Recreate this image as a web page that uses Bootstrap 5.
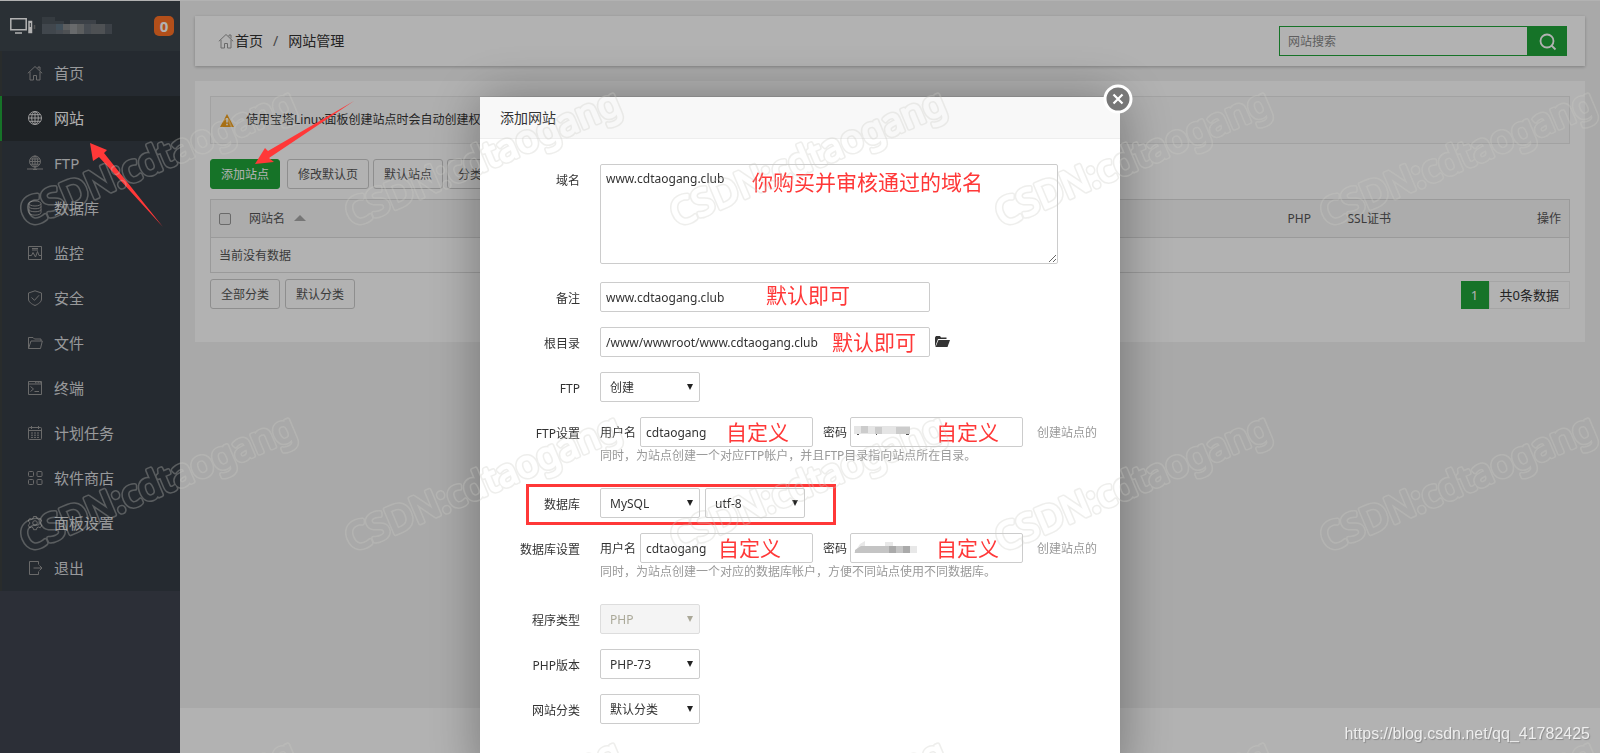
<!DOCTYPE html>
<html lang="zh-CN">
<head>
<meta charset="utf-8">
<meta name="viewport" content="width=device-width, initial-scale=1">
<title>网站管理</title>
<link href="https://cdn.jsdelivr.net/npm/bootstrap@5.3.0/dist/css/bootstrap.min.css" rel="stylesheet">
<style>
  body { font: 12px/20px "Noto Sans", "Noto Sans CJK SC", sans-serif; color: #333; background: #f3f3f3; overflow: hidden; }
  a { color: inherit; text-decoration: none; }
  .shell { border-top: 1px solid #fff; }
  .side { width: 180px; background: #3f4450; }
  .side-head { height: 50px; background: #3d454d; padding: 0 6px 0 10px; }
  .count { width: 20px; height: 20px; border-radius: 5px; background: #ff7226; font-size: 15px; }
  .menu a { height: 45px; padding: 0 0 2px 25px; border-left: 2px solid #3c403f; background: #363d46; color: #dadcdf; font-size: 15px; gap: 11px; }
  .menu svg { width: 16px; height: 16px; stroke: #999; fill: none; }
  .menu a.active { background: #2c3136; border-color: #20a53a; color: #fff; }
  .menu a.active svg { stroke: #ddd; }
  .panel { background: #fff; margin: 15px 15px 0; }
  .crumb-bar { height: 50px; padding: 0 18px 0 23px; box-shadow: 0 1px 3px rgba(0,0,0,.25); font-size: 14px; }
  .crumb-bar a { margin-left: 1px; }
  .crumb-gap { margin: 0 10px; color: #666; }
  .search-field { width: 288px; height: 30px; }
  .search-field input { border: 1px solid #20a53a; padding: 2px 8px 0; font-size: 12px; border-radius: 0; }
  .search-field button { width: 39px; background: #20a53a; border: 0; color: #fff; }
  .search-field input::placeholder { color: #888; }
  .site-panel { padding: 15px 15px 33px; }
  .tip { height: 48px; border: 1px solid #e9e9e9; background: #fbfbfb; padding-left: 9px; gap: 12px; margin-bottom: 15px; }
  .tools { gap: 4px; margin-bottom: 10px; }
  .tool { height: 30px; border: 1px solid #ccc; border-radius: 3px; background: #fff; color: #555; padding: 0 10px; font-size: 12px; line-height: 30px; white-space: nowrap; }
  .tool.go { background: #20a53a; border-color: #20a53a; color: #fff; margin-right: 3px; }
  .sites { border: 1px solid #ddd; color: #555; margin-bottom: 6px; }
  .sites > :not(caption) > * > * { padding: 8px; border-bottom: 0; font-weight: 400; background: transparent; color: inherit; }
  .sites thead th { height: 38px; background: #f6f6f6; border-bottom: 1px solid #ddd; }
  .sites tbody td { height: 34px; padding: 8px 8px 6px; }
  .sites .form-check-input { width: 12px; height: 12px; margin: 0 18px 0 0; border-radius: 2px; border-color: #999; background: #eee; vertical-align: -2px; }
  .sites th svg { margin-left: 6px; vertical-align: 2px; }
  .pages { height: 28px; font-size: 13px; line-height: 26px; color: #333; }
  .pages b { width: 28px; background: #20a53a; color: #fff; font-weight: 400; line-height: 28px; }
  .pages span { border: 1px solid #ececec; padding: 0 10px; }
  .foot { height: 45px; background: #fff; }
  .modal-backdrop { --bs-backdrop-opacity: .3; }
  .modal { overflow: hidden; }
  .modal-dialog { max-width: 640px; margin: 97px auto 0; }
  .modal-content { border: 0; border-radius: 0; box-shadow: 1px 1px 50px rgba(0,0,0,.35); }
  .modal-header { height: 42px; padding: 0 20px; background: #f8f8f8; border-bottom: 1px solid #eee; border-radius: 0; font-size: 14px; }
  .shut { position: absolute; right: -13px; top: -13px; width: 30px; height: 30px; border: 0; padding: 0; background: none; }
  .modal-body { padding: 25px 22px 40px 0; }
  .line { display: flex; margin-bottom: 15px; }
  .line > label, .line > .cap { width: 100px; height: 30px; margin-right: 20px; text-align: right; line-height: 34px; flex: none; }
  .line.tall { margin-bottom: 18px; }
  .line .form-control, .line .form-select { height: 30px; border: 1px solid #ccc; border-radius: 2px; padding: 0 5px; font-size: 12px; line-height: 28px; color: #333; }
  .line textarea.form-control { height: 100px; padding: 4px 5px; line-height: 20px; resize: both; }
  .line .form-select { width: 100px; padding: 1px 20px 0 9px; background: #fff url("data:image/svg+xml,%3Csvg xmlns='http://www.w3.org/2000/svg' viewBox='0 0 6 6'%3E%3Cpath d='M0 0h6L3 6z' fill='%23222'/%3E%3C/svg%3E") no-repeat right 6px top 11px / 6px 6px; }
  .line .form-select:disabled { border-color: #ddd; color: #aaa898; opacity: 1; background-color: #f4f4f4; background-image: url("data:image/svg+xml,%3Csvg xmlns='http://www.w3.org/2000/svg' viewBox='0 0 6 6'%3E%3Cpath d='M0 0h6L3 6z' fill='%23aaa898'/%3E%3C/svg%3E"); }
  .wide { width: 458px; }
  .mid { width: 330px; }
  .pair { width: 173px; }
  .duo { gap: 5px; }
  .note { color: #999; }
  .account { width: 500px; height: 56px; line-height: 32px; }
  .account .d-flex { height: 30px; }
  .account .second { line-height: 18px; }
  .user-cap { margin-right: 4px; }
  .pass-cap { margin: 0 3px 0 10px; }
  .side-note { margin-left: 14px; }
  .mark-red { position: absolute; color: #ff3838; font-size: 21px; line-height: 28px; top: 1px; white-space: nowrap; pointer-events: none; }
  .frame-red { position: absolute; left: 46px; top: -4px; width: 310px; height: 41px; border: 3px solid #ff3838; pointer-events: none; }
  .mosaic { position: absolute; left: 4px; top: 8px; }
  .over { position: fixed; inset: 0; width: 100%; height: 100%; z-index: 2000; pointer-events: none; }
  .source { position: fixed; right: 10px; bottom: 8px; z-index: 2001; font: 16px/22px "Liberation Sans", sans-serif; color: #eee; text-shadow: 1px 1px 1px #888; }
</style>
</head>
<body>
<div class="shell d-flex min-vh-100">
  <aside class="side flex-shrink-0">
    <div class="side-head d-flex align-items-center">
      <svg width="26" height="18" viewBox="0 0 26 18" fill="none" stroke="#fff" stroke-width="1.5"><path d="M.8 1.8h15.4v11H.8zM5 16h7"/><path d="M19 4.500h2.500v11H19z" fill="#fff"/><path stroke="#3d454d" stroke-width="1" d="M20.300 6v4"/><path d="M24.500 8v4" stroke="#777"/></svg>
      <svg class="ms-1" width="74" height="18" viewBox="0 0 74 18" aria-hidden="true"><path fill="#4d555c" d="M2 0h13v4h9v3H2z"/><path fill="#5d666f" d="M2 7h14v10H2z"/><path fill="#5e7280" d="M16 7h7v6h-7z"/><path fill="#666e76" d="M16 13h7v4h-7zM44 7h7v10h-7z"/><path fill="#858789" d="M23 7h7v6h-7zM37 7h7v10h-7z"/><path fill="#96999b" d="M30 7h7v10h-7z"/><path fill="#707479" d="M23 13h7v4h-7zM51 7h14v10H51z"/><path fill="#565e66" d="M65 7h7v10h-7zM30 3h26v4H30z"/></svg>
      <span class="count ms-auto text-white fw-bold d-flex align-items-center justify-content-center">0</span>
    </div>
    <nav class="menu">
      <a href="#" class="d-flex align-items-center"><svg viewBox="0 0 16 16"><path d="M.8 8.3 8 1.5l7.2 6.8M3 6.8V15h3.500v-4.500h3V15H13V6.800M11 3.500V2h2v3.500"/></svg>首页</a>
      <a href="#" class="active d-flex align-items-center"><svg viewBox="0 0 16 16"><circle cx="8" cy="8" r="6.500"/><ellipse cx="8" cy="8" rx="3.300" ry="6.500"/><path d="M8 1.500v13M1.500 8h13M2.500 4.700h11M2.500 11.300h11"/></svg>网站</a>
      <a href="#" class="d-flex align-items-center"><svg viewBox="0 0 16 16"><circle cx="8" cy="6.500" r="5.500"/><ellipse cx="8" cy="6.500" rx="2.700" ry="5.500"/><path d="M8 1v13M2.500 6.500h11M3.300 4h9.400M3.300 9.200h9.400M0 14h16M6 14.500h4"/></svg>FTP</a>
      <a href="#" class="d-flex align-items-center"><svg viewBox="0 0 16 16"><ellipse cx="8" cy="3.500" rx="6" ry="2.500"/><path d="M2 3.500v9C2 16 14 16 14 12.500v-9M2 6.500c0 3 12 3 12 0M2 9.500c0 3 12 3 12 0"/></svg>数据库</a>
      <a href="#" class="d-flex align-items-center"><svg viewBox="0 0 16 16"><path d="M1.500 1.500h13v13h-13zM1.500 10.500h3l1.500-3 2.500 4.500 2-5.500 1.500 4h2.500M5 3.500h6M5 5h6"/></svg>监控</a>
      <a href="#" class="d-flex align-items-center"><svg viewBox="0 0 16 16"><path d="M8 .8 14.500 3v6c0 3-3 5-6.500 6.500C4.500 14 1.500 12 1.500 9V3zM4.500 7.500 7.500 10.300l4.500-5"/></svg>安全</a>
      <a href="#" class="d-flex align-items-center"><svg viewBox="0 0 16 16"><path d="M1.500 13.500v-11H6L7.500 4H14v2M1.500 13.500 4 6h11.300l-1.800 7.500z"/></svg>文件</a>
      <a href="#" class="d-flex align-items-center"><svg viewBox="0 0 16 16"><path d="M1.500 1.500h13v13h-13zM1.500 4h13M8 2.700h1.500m1 0H12m.5 0H14M3.500 6.500 6.500 9l-3 2.500M7.500 11.500H12"/></svg>终端</a>
      <a href="#" class="d-flex align-items-center"><svg viewBox="0 0 16 16"><rect x="1.500" y="2.500" width="13" height="12" rx="1"/><path d="M1.500 5.500h13M4.500 1v3M11.500 1v3M4 8h2m1 0h2m1 0h2M4 10.200h2m1 0h2m1 0h2M4 12.400h2m1 0h2m1 0h2"/></svg>计划任务</a>
      <a href="#" class="d-flex align-items-center"><svg viewBox="0 0 16 16"><rect x="1.500" y="1.500" width="5" height="5" rx="1"/><rect x="10" y="1.500" width="5" height="5" rx="1"/><rect x="1.500" y="9.500" width="5" height="5" rx="1"/><rect x="10" y="9.500" width="5" height="5" rx="1"/></svg>软件商店</a>
      <a href="#" class="d-flex align-items-center"><svg viewBox="0 0 16 16"><circle cx="8" cy="8" r="2.300"/><path d="M6.500 1.500h3l.4 2 1.500.8 1.900-.8 1.500 2.500-1.500 1.400v1.500l1.500 1.300-1.500 2.500-1.900-.7-1.500.8-.4 1.900h-3l-.4-1.900-1.500-.8-1.900.7L1.200 10.200l1.500-1.300V7.400L1.200 6l1.500-2.500 1.900.8 1.500-.8z"/></svg>面板设置</a>
      <a href="#" class="d-flex align-items-center"><svg viewBox="0 0 16 16"><path d="M11.500 4.500v-3h-9v13h9v-3M6.500 8H15M12.500 5.500 15 8l-2.500 2.500"/></svg>退出</a>
    </nav>
  </aside>

  <div class="flex-grow-1 d-flex flex-column">
    <header class="panel crumb-bar d-flex align-items-center">
      <svg width="16" height="16" viewBox="0 0 16 16" fill="none" stroke="#999"><path d="M.8 8.300 8 1.500l7.200 6.800M3 6.800V15h3.500v-4.500h3V15H13V6.800M11 3.500V2h2v3.500"/></svg>
      <a href="#">首页</a><span class="crumb-gap">/</span><span>网站管理</span>
      <form class="search-field d-flex ms-auto">
        <input class="form-control shadow-none" type="text" aria-label="网站搜索" placeholder="网站搜索">
        <button type="button" class="flex-shrink-0 p-0" aria-label="搜索"><svg width="18" height="18" viewBox="0 0 18 18" fill="none" stroke="#fff" stroke-width="1.800"><circle cx="8" cy="8" r="6.500"/><path d="m12.500 12.500 4 4"/></svg></button>
      </form>
    </header>

    <main class="panel site-panel">
      <div class="tip d-flex align-items-center">
        <svg width="14" height="13" viewBox="0 0 14 13"><path fill="#f0a01e" d="M7 0 14 13H0z"/><path fill="#fff" d="M6.200 4h1.600v4.500H6.200zM6.200 9.700h1.600v1.600H6.200z"/></svg>
        <span>使用宝塔Linux面板创建站点时会自动创建权</span>
      </div>
      <div class="tools d-flex">
        <button type="button" class="tool go">添加站点</button>
        <button type="button" class="tool">修改默认页</button>
        <button type="button" class="tool">默认站点</button>
        <button type="button" class="tool">分类管理</button>
      </div>
      <table class="table sites">
        <thead><tr>
          <th><input class="form-check-input" type="checkbox" aria-label="全选">网站名 <svg width="12" height="6" viewBox="0 0 12 6"><path fill="#aaa" d="m6 0 6 6H0z"/></svg></th>
          <th style="width:60px">PHP</th><th style="width:170px">SSL证书</th><th class="text-end" style="width:60px">操作</th>
        </tr></thead>
        <tbody><tr><td colspan="4">当前没有数据</td></tr></tbody>
      </table>
      <div class="d-flex duo">
        <button type="button" class="tool">全部分类</button>
        <button type="button" class="tool">默认分类</button>
        <div class="pages d-flex ms-auto align-self-end"><b class="text-center">1</b><span>共0条数据</span></div>
      </div>
    </main>
    <footer class="foot mt-auto"></footer>
  </div>
</div>

<div class="modal-backdrop show"></div>
<div class="modal d-block" role="dialog" aria-label="添加网站">
  <div class="modal-dialog">
    <div class="modal-content">
      <div class="modal-header">添加网站
        <button type="button" class="shut" aria-label="关闭"><svg width="30" height="30" viewBox="0 0 30 30"><circle cx="15" cy="15" r="13" fill="#777" stroke="#fff" stroke-width="3"/><path d="m10.500 10.500 9 9m0-9-9 9" stroke="#fff" stroke-width="2.200"/></svg></button>
      </div>
      <form class="modal-body">
        <div class="line tall">
          <label for="domain">域名</label>
          <div class="position-relative"><textarea id="domain" class="form-control wide">www.cdtaogang.club</textarea><span class="mark-red" style="left:152px;top:4px">你购买并审核通过的域名</span></div>
        </div>
        <div class="line">
          <label for="remark">备注</label>
          <div class="position-relative"><input id="remark" class="form-control mid" value="www.cdtaogang.club"><span class="mark-red" style="left:166px;top:-1px">默认即可</span></div>
        </div>
        <div class="line">
          <label for="root">根目录</label>
          <div class="position-relative"><input id="root" class="form-control mid" value="/www/wwwroot/www.cdtaogang.club"><span class="mark-red" style="left:232px">默认即可</span></div>
          <svg class="ms-1 mt-2" width="17" height="14" viewBox="0 0 17 14" fill="#333"><path d="M1 12V2.500L2 1h4l1 1.500h5.500V4H4z"/><path d="M4.500 5H16l-2.500 7H1.500z"/></svg>
        </div>
        <div class="line">
          <label for="ftp">FTP</label>
          <select id="ftp" class="form-select"><option>创建</option></select>
        </div>
        <div class="line">
          <span class="cap">FTP设置</span>
          <div class="account">
            <div class="d-flex">
              <label for="fuser" class="user-cap">用户名</label>
              <div class="position-relative"><input id="fuser" class="form-control pair" value="cdtaogang"><span class="mark-red" style="left:86px">自定义</span></div>
              <label for="fpass" class="pass-cap">密码</label>
              <div class="position-relative"><input id="fpass" class="form-control pair"><svg class="mosaic" width="60" height="14" viewBox="0 0 60 14" aria-hidden="true"><path fill="#e5e5e5" d="M0 1h56v8H0z"/><path fill="#ccc" d="M7 1h7v7H7zM21 2h7v7h-7zM42 2h14v7H42z"/><path fill="#555" d="M3 9h2v1H3zM22 9h1v1h-1zM52 9h3v1h-3z"/></svg><span class="mark-red" style="left:86px">自定义</span></div>
              <span class="note side-note">创建站点的</span>
            </div>
            <div class="note second">同时，为站点创建一个对应FTP帐户，并且FTP目录指向站点所在目录。</div>
          </div>
        </div>
        <div class="line position-relative">
          <label for="db">数据库</label>
          <div class="d-flex duo">
            <select id="db" class="form-select"><option>MySQL</option></select>
            <select class="form-select" aria-label="字符集"><option>utf-8</option></select>
          </div>
          <div class="frame-red"></div>
        </div>
        <div class="line">
          <span class="cap">数据库设置</span>
          <div class="account">
            <div class="d-flex">
              <label for="duser" class="user-cap">用户名</label>
              <div class="position-relative"><input id="duser" class="form-control pair" value="cdtaogang"><span class="mark-red" style="left:78px">自定义</span></div>
              <label for="dpass" class="pass-cap">密码</label>
              <div class="position-relative"><input id="dpass" class="form-control pair"><svg class="mosaic" width="64" height="14" viewBox="0 0 64 14" aria-hidden="true"><path fill="#e8e8e8" d="m6 3 5-3v5h20V1h8v4h24v7H0z"/><path fill="#c4c4c4" d="m1 9 6-4h49v7H1z"/><path fill="#aaa" d="M35 5h7v7h-7zM49 5h7v7h-7z"/></svg><span class="mark-red" style="left:86px">自定义</span></div>
              <span class="note side-note">创建站点的</span>
            </div>
            <div class="note second">同时，为站点创建一个对应的数据库帐户，方便不同站点使用不同数据库。</div>
          </div>
        </div>
        <div class="line">
          <label for="kind">程序类型</label>
          <select id="kind" class="form-select" disabled><option>PHP</option></select>
        </div>
        <div class="line">
          <label for="ver">PHP版本</label>
          <select id="ver" class="form-select"><option>PHP-73</option></select>
        </div>
        <div class="line">
          <label for="group">网站分类</label>
          <select id="group" class="form-select"><option>默认分类</option></select>
        </div>
      </form>
    </div>
  </div>
</div>

<svg class="over" aria-hidden="true">
  <defs>
    <mask id="ring" maskUnits="userSpaceOnUse" x="0" y="0" width="325" height="325">
      <g transform="translate(27 227) rotate(-23)" font-family="Noto Sans" font-size="37">
        <text fill="#fff" stroke="#fff" stroke-width="5" stroke-linejoin="round">CSDN:cdtaogang</text>
        <text fill="#000" stroke="#000" stroke-width="2" stroke-linejoin="round">CSDN:cdtaogang</text>
      </g>
    </mask>
    <pattern id="wm" width="325" height="325" patternUnits="userSpaceOnUse">
      <rect width="325" height="325" fill="#cbcbc4" fill-opacity=".32" mask="url(#ring)"/>
    </pattern>
  </defs>
  <g fill="#ff3838">
    <path d="m90 143 17 7-3 3 59 74-64-70-6 4z"/>
    <path d="m255 164 19-2-5-4 85-57-86 50-3-3z"/>
  </g>
  <rect width="100%" height="100%" fill="url(#wm)"/>
</svg>
<div class="source">https://blog.csdn.net/qq_41782425</div>
<script src="https://cdn.jsdelivr.net/npm/bootstrap@5.3.0/dist/js/bootstrap.bundle.min.js"></script>
</body>
</html>
